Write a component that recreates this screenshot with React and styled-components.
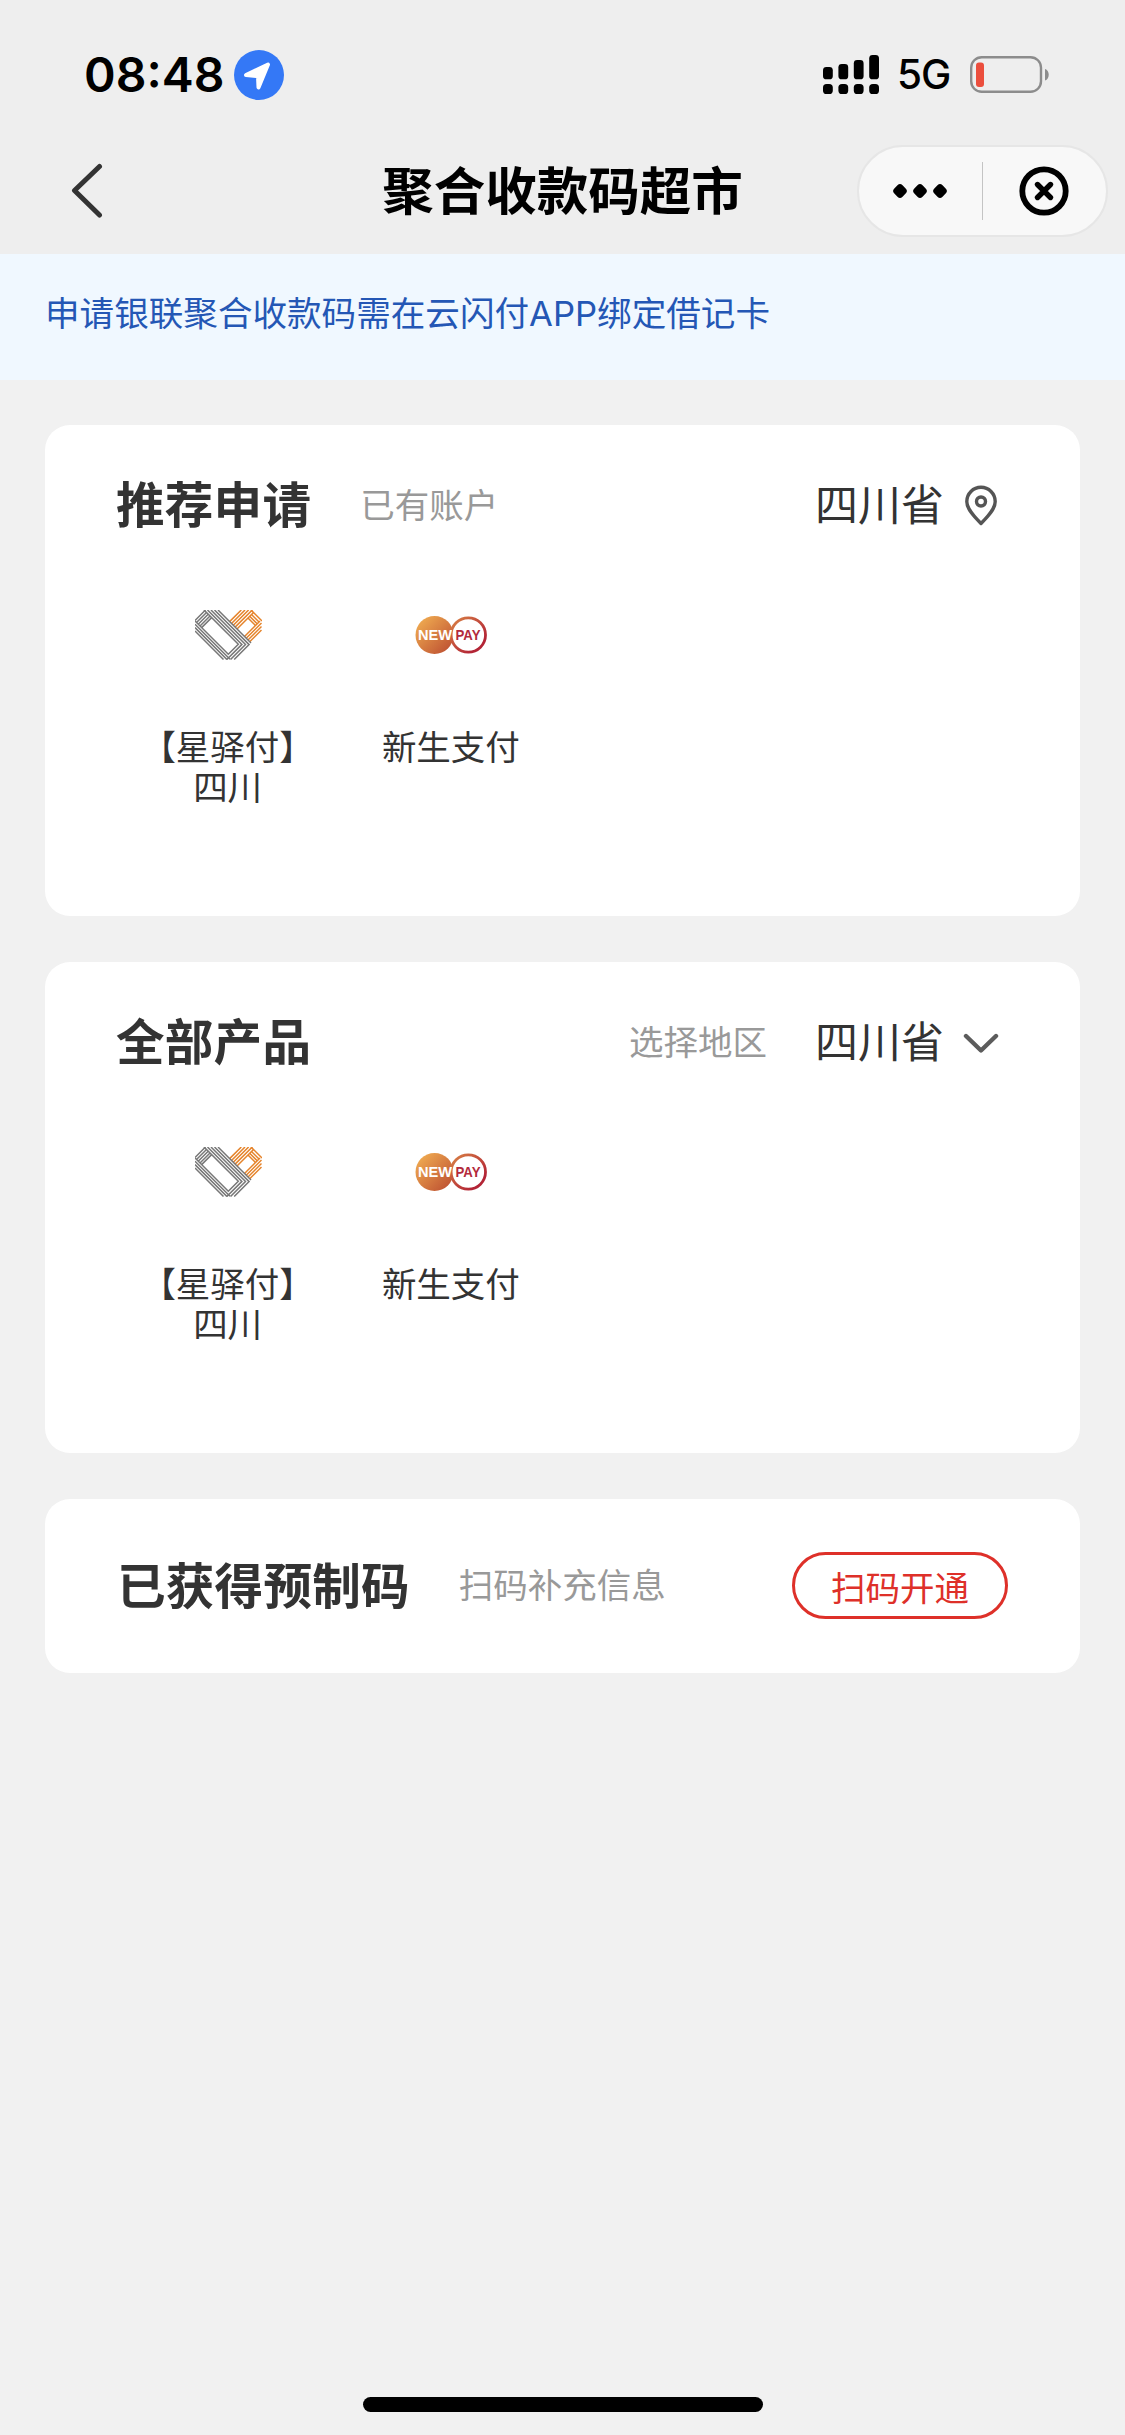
import styled, { createGlobalStyle } from "styled-components"


const GlobalStyle = createGlobalStyle`
* {
    box-sizing: border-box;
}
body {
    margin: 0;
    background: #f1f1f1;
    color: #333;
    font-family: "Noto Sans CJK SC", sans-serif;
}
`

const Page = styled.div`
display: flex;
flex-direction: column;
width: 1125px;
height: 2435px;
background: #f1f1f1;
`

const StatusBar = styled.div`
display: flex;
justify-content: space-between;
height: 132px;
padding: 50px 75px 0 84px;
background: #eee;
font-family: Inter, "Liberation Sans", sans-serif;
color: #000;
`

const StatusGroup = styled.div`
display: flex;
align-items: center;
height: 50px;
`

const Time = styled.span`
width: 150px;
font-size: 48px;
font-weight: 600;
line-height: 50px;
white-space: nowrap;
`

const Network = styled.span`
width: 73px;
margin-left: 18px;
font-size: 40.5px;
font-weight: 500;
line-height: 50px;
letter-spacing: -1px;
`

const NavBar = styled.header`
display: grid;
grid-template-columns: 268px 1fr 268px;
align-items: center;
height: 122px;
padding-bottom: 5px;
background: #eee;
`

const BackButton = styled.button`
display: flex;
width: 40px;
margin-left: 68px;
padding: 0;
border: 0;
background: none;
`

const NavTitle = styled.h1`
margin: 0;
padding-bottom: 6px;
font-size: 51.5px;
font-weight: 700;
line-height: 60px;
text-align: center;
color: #000;
`

const Capsule = styled.div`
display: flex;
align-items: center;
width: 251px;
height: 92px;
border: 2px solid #e6e6e6;
border-radius: 46px;
background: #f8f8f8;
`

const CapsuleButton = styled.button`
display: flex;
flex: 1;
justify-content: center;
padding: 0 2px 0 0;
border: 0;
background: none;
`

const CapsuleLine = styled.span`
width: 1px;
height: 58px;
background: #c4c4c4;
`

const Notice = styled.div`
height: 126px;
padding: 34px 45px 0;
background: #f0f8ff;
font-family: Inter, "Noto Sans CJK SC", sans-serif;
font-size: 34.6px;
line-height: 50px;
color: #2457b5;
`

const Content = styled.main`
display: flex;
flex: 1;
flex-direction: column;
gap: 46px;
padding: 45px 45px 0;
`

const Card = styled.section`
height: ${props => props.$short ? "174px" : "491px"};
padding: ${props => props.$short ? "53px 72px 0" : "50px 71px 0"};
border-radius: 25px;
background: #fff;
`

const CardHead = styled.div`
display: flex;
align-items: center;
height: ${props => props.$short ? "67px" : "60px"};
`

const CardTitle = styled.h2`
margin: 0 49px 0 0;
padding-bottom: 6px;
font-size: 48.6px;
font-weight: 700;
line-height: 60px;
letter-spacing: 0.2px;
`

const Hint = styled.span`
padding-bottom: 5px;
font-size: 34.5px;
line-height: 50px;
color: #999;
`

const Region = styled.div`
display: flex;
align-items: center;
gap: 48px;
margin-left: auto;
padding-right: 10px;
`

const RegionName = styled.span`
display: flex;
align-items: center;
gap: 19px;
padding-bottom: 7px;
font-size: 43px;
line-height: 60px;

svg {
    display: block;
    margin-top: 9px;
}
`

const Products = styled.div`
display: grid;
grid-template-columns: repeat(4, 1fr);
padding-top: 65px;
`

const Product = styled.div`
display: flex;
flex-direction: column;
align-items: center;
`

const LogoBox = styled.div`
display: flex;
align-items: center;
justify-content: center;
height: 70px;
margin-bottom: 55px;
padding-left: 1px;
`

const ProductName = styled.div`
font-size: 34.5px;
line-height: 40px;
text-align: center;
white-space: pre-line;
`

const ScanButton = styled.button`
width: 216px;
height: 67px;
margin-left: auto;
padding: 0;
border: 3px solid #de3029;
border-radius: 34px;
background: #fff;
font-family: inherit;
font-size: 34.5px;
line-height: 50px;
color: #de3029;
`

const HomeBar = styled.div`
width: 400px;
height: 15px;
margin: 0 auto 23px;
border-radius: 8px;
background: #000;
`


function LocationIcon() {
    return (
        <svg width="50" height="50" viewBox="0 0 50 50">
            <circle cx="25" cy="25" r="25" fill="#3478f6" />
            <path d="M12 25 34 14.5 24.5 37.5 24 26.2Z" fill="#fff" stroke="#fff" strokeWidth="4" strokeLinejoin="round" />
        </svg>
    )
}

function SignalIcon() {
    const tops = [12, 9, 5, 0]

    return (
        <svg width="56" height="40" viewBox="0 0 56 40">
            {tops.map((top, i) => (
                <g key={top}>
                    <rect x={i * 15.4} y={top} width="9.8" height={24.3 - top} rx="3.4" />
                    <rect x={i * 15.4} y="29" width="9.8" height="10" rx="3.6" />
                </g>
            ))}
        </svg>
    )
}

function BatteryIcon() {
    return (
        <svg width="80" height="38" viewBox="0 0 80 38">
            <rect x="1.2" y="1.2" width="69.8" height="34.6" rx="10.5" fill="none" stroke="#8c8c8c" strokeWidth="2.4" />
            <rect x="6" y="6.5" width="8" height="24.5" rx="3" fill="#eb4e3d" />
            <path d="M75 13c5 1.5 5 10 0 11.5z" fill="#8c8c8c" />
        </svg>
    )
}

function BackIcon() {
    return (
        <svg width="40" height="56" viewBox="0 0 40 56" fill="none" stroke="#333" strokeWidth="5" strokeLinecap="round" strokeLinejoin="round">
            <path d="M31.5 3.5 6.5 27.5 31.5 52" />
        </svg>
    )
}

function MoreIcon() {
    return (
        <svg width="56" height="16" viewBox="0 0 56 16">
            {[8, 28, 48].map(cx => (
                <rect key={cx} x={cx - 5.8} y="2.2" width="11.6" height="11.6" rx="3.6" transform={`rotate(45 ${cx} 8)`} />
            ))}
        </svg>
    )
}

function CloseIcon() {
    return (
        <svg width="50" height="50" viewBox="0 0 50 50" fill="none" stroke="#000" strokeLinecap="round">
            <circle cx="25" cy="25" r="21.7" strokeWidth="5.8" />
            <path d="m18.5 18.5 13 13m0-13-13 13" strokeWidth="5.4" />
        </svg>
    )
}

function PinIcon() {
    return (
        <svg width="36" height="42" viewBox="0 0 36 42" fill="none" stroke="#555">
            <path d="M18 38.5C10 30.5 3.8 23.5 3.8 16.5a14.2 14.2 0 0 1 28.4 0c0 7-6.2 14-14.2 22z" strokeWidth="3.4" strokeLinejoin="round" />
            <circle cx="18" cy="16.5" r="4.5" strokeWidth="3.4" />
        </svg>
    )
}

function ArrowIcon() {
    return (
        <svg width="36" height="22" viewBox="0 0 36 22" fill="none" stroke="#5c5c5c" strokeWidth="4.4" strokeLinecap="round" strokeLinejoin="round">
            <path d="M3 4 18 18.5 33 4" />
        </svg>
    )
}

//Striped ribbons folded into a heart, grey over orange :
function StarposLogo() {
    return (
        <svg width="67" height="50" viewBox="0 0 67 50" fill="none" strokeWidth="1.5">
            <g stroke="#e5832a">
                <path d="M34.6 11.6 46.3 0M36.5 13.5 50 0M38.3 15.3 53.6 0M40.1 17.1 57.3 0M42 19 58.5 2.5" />
                <path d="M53 8l7.5 7.5M54.7 6.3l7.5 7.5M56.5 4.5 64 12M56 0l11 11" />
                <path d="M49.5 26.5 65 11M51.2 28.2 66.5 13M53 30l13.5-13.5M54.7 31.7 66.5 20" />
            </g>
            <g stroke="#777">
                <path d="M0 10.5 10.5 0M1.5 12.5l10-10M3.2 14.2l10-10M5 16 15 6M6.6 17.6l10-10" />
                <path d="M9 0l34.3 34.3-10 10L0 11" />
                <path d="M12.5 0l34.4 34.4L31.8 49.5" />
                <path d="M16 0l34.5 34.5L35.5 49.5" />
                <path d="M19.5 0l34.6 34.6L39.2 49.5" />
                <path d="M23 0l33 33" />
                <path d="M0 14.3l35 35M0 17.6l32 32M0 21l28.5 28.5" />
            </g>
        </svg>
    )
}

function NewpayLogo() {
    return (
        <svg width="72" height="40" viewBox="0 0 72 40" fontFamily="'Liberation Sans', sans-serif" fontWeight="700">
            <defs>
                <linearGradient id="newpayFill" x1="0" y1="0" x2="1" y2="1">
                    <stop offset="0.1" stopColor="#efaa50" />
                    <stop offset="1" stopColor="#b9482f" />
                </linearGradient>
                <linearGradient id="newpayRing" x1="0" y1="0" x2="1" y2="1">
                    <stop offset="0" stopColor="#d98345" />
                    <stop offset="0.8" stopColor="#b32536" />
                </linearGradient>
            </defs>
            <circle cx="19.5" cy="20" r="19" fill="url(#newpayFill)" />
            <circle cx="53.3" cy="20" r="17.2" fill="#fff" stroke="url(#newpayRing)" strokeWidth="2.8" />
            <text x="3" y="25" fontSize="14" textLength="34" lengthAdjust="spacingAndGlyphs" fill="#fff">NEW</text>
            <text x="40.5" y="25" fontSize="14" textLength="25" lengthAdjust="spacingAndGlyphs" fill="#b32a3c">PAY</text>
        </svg>
    )
}


const products = [
    { name: "【星驿付】\n四川", Logo: StarposLogo },
    { name: "新生支付", Logo: NewpayLogo },
]

function ProductList() {
    return (
        <Products>
            {products.map(({ name, Logo }) => (
                <Product key={name}>
                    <LogoBox><Logo /></LogoBox>
                    <ProductName>{name}</ProductName>
                </Product>
            ))}
        </Products>
    )
}

function App() {

    return (
        <Page>
            <GlobalStyle />
            <StatusBar>
                <StatusGroup>
                    <Time>08:48</Time>
                    <LocationIcon />
                </StatusGroup>
                <StatusGroup>
                    <SignalIcon />
                    <Network>5G</Network>
                    <BatteryIcon />
                </StatusGroup>
            </StatusBar>
            <NavBar>
                <BackButton aria-label="返回"><BackIcon /></BackButton>
                <NavTitle>聚合收款码超市</NavTitle>
                <Capsule>
                    <CapsuleButton aria-label="更多"><MoreIcon /></CapsuleButton>
                    <CapsuleLine />
                    <CapsuleButton aria-label="关闭"><CloseIcon /></CapsuleButton>
                </Capsule>
            </NavBar>
            <Notice>申请银联聚合收款码需在云闪付APP绑定借记卡</Notice>
            <Content>
                <Card>
                    <CardHead>
                        <CardTitle>推荐申请</CardTitle>
                        <Hint>已有账户</Hint>
                        <Region>
                            <RegionName>四川省 <PinIcon /></RegionName>
                        </Region>
                    </CardHead>
                    <ProductList />
                </Card>
                <Card>
                    <CardHead>
                        <CardTitle>全部产品</CardTitle>
                        <Region>
                            <Hint>选择地区</Hint>
                            <RegionName>四川省 <ArrowIcon /></RegionName>
                        </Region>
                    </CardHead>
                    <ProductList />
                </Card>
                <Card $short>
                    <CardHead $short>
                        <CardTitle>已获得预制码</CardTitle>
                        <Hint>扫码补充信息</Hint>
                        <ScanButton>扫码开通</ScanButton>
                    </CardHead>
                </Card>
            </Content>
            <HomeBar />
        </Page>
    )

}

export default App
